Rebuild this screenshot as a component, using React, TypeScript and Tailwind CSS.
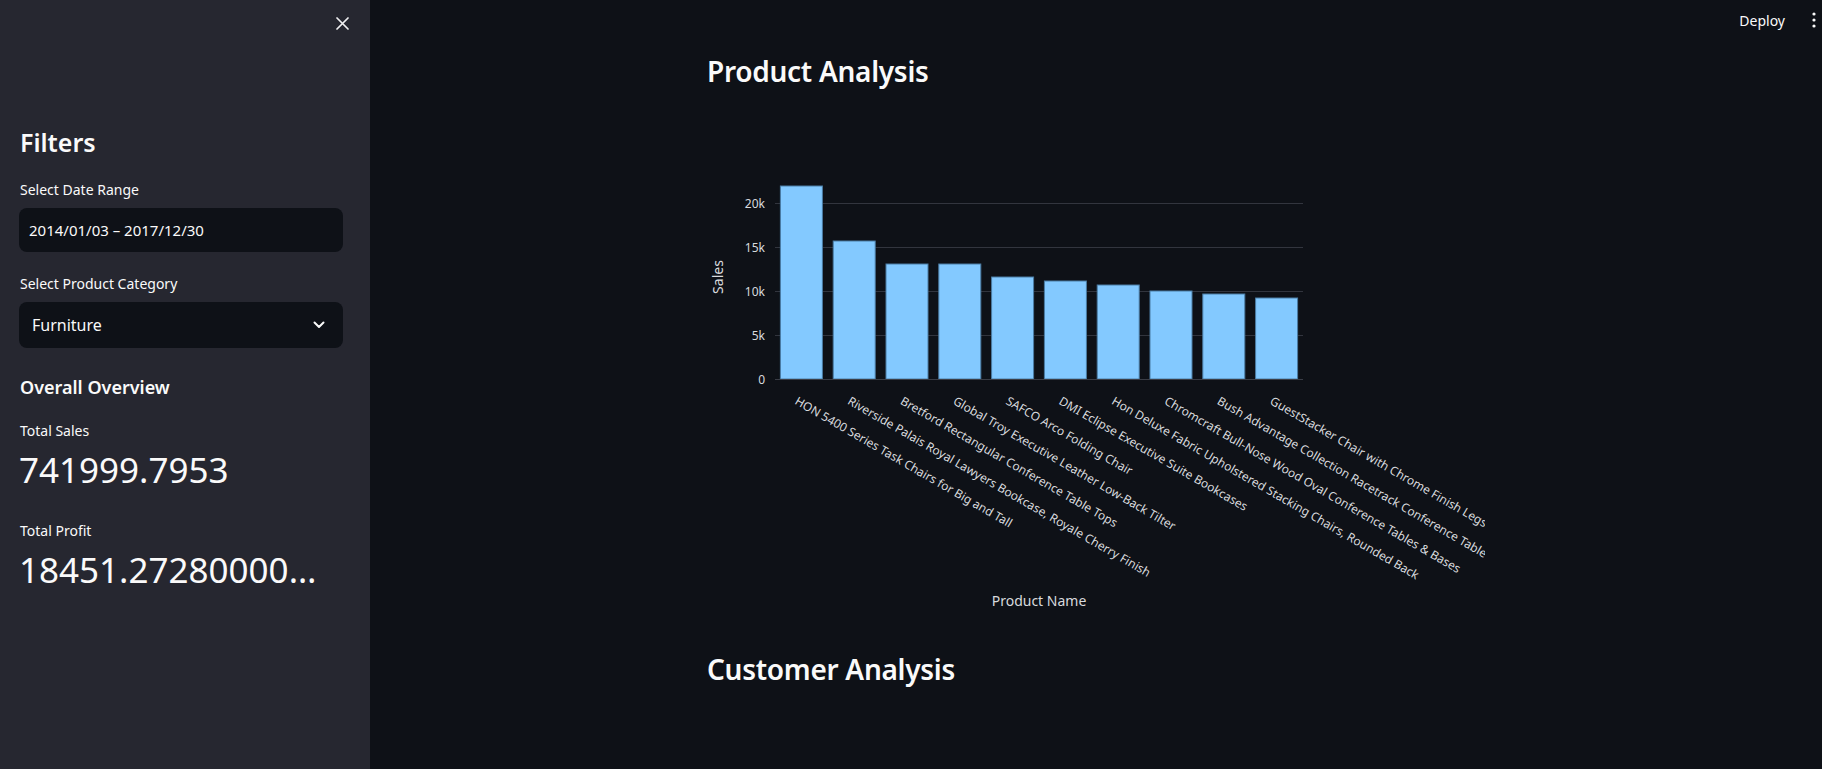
const sales = [
  { name: 'HON 5400 Series Task Chairs for Big and Tall', top: 76 },
  { name: 'Riverside Palais Royal Lawyers Bookcase, Royale Cherry Finish', top: 131 },
  { name: 'Bretford Rectangular Conference Table Tops', top: 154 },
  { name: 'Global Troy Executive Leather Low-Back Tilter', top: 154 },
  { name: 'SAFCO Arco Folding Chair', top: 167 },
  { name: 'DMI Eclipse Executive Suite Bookcases', top: 171 },
  { name: 'Hon Deluxe Fabric Upholstered Stacking Chairs, Rounded Back', top: 175 },
  { name: 'Chromcraft Bull-Nose Wood Oval Conference Tables & Bases', top: 181 },
  { name: 'Bush Advantage Collection Racetrack Conference Table', top: 184 },
  { name: 'GuestStacker Chair with Chrome Finish Legs', top: 188 },
];

const ticks = [
  { label: '20k', y: 93 },
  { label: '15k', y: 137 },
  { label: '10k', y: 181 },
  { label: '5k', y: 225 },
  { label: '0', y: 269 },
];

const font = '"Noto Sans", "Open Sans", sans-serif';

const SalesChart = () => {
  const left = 68;
  const band = 52.8;
  const zero = 269;

  return (
    <svg width="778" height="510" viewBox="0 0 778 510" className="block" style={{ fontFamily: font }}>
      {/* grid */}
      {ticks.map((t) => (
        <g key={t.label}>
          <line x1={left} x2={596} y1={t.y + 0.5} y2={t.y + 0.5} stroke="#32353e" strokeWidth="1" />
          <text x="58" y={t.y} textAnchor="end" dominantBaseline="central" fontSize="12" fill="#d8dade">
            {t.label}
          </text>
        </g>
      ))}

      {/* bars */}
      {sales.map((s, i) => {
        const cx = left + band * (i + 0.5);
        return (
          <g key={s.name}>
            <rect
              x={cx - 21}
              y={s.top}
              width="42"
              height={zero - s.top}
              fill="#83c9ff"
              stroke="#4a7ca4"
              strokeWidth="1"
            />
            <text
              x={cx - 7.5}
              y={293.5}
              fontSize="12"
              fill="#d8dade"
              transform={`rotate(30 ${cx - 7.5} 293.5)`}
            >
              {s.name}
            </text>
          </g>
        );
      })}

      <line x1={left} x2={596} y1={zero + 0.5} y2={zero + 0.5} stroke="#3a3d46" strokeWidth="1" />

      {/* axis titles */}
      <text
        x="10"
        y="167"
        fontSize="14"
        fill="#d8dade"
        textAnchor="middle"
        dominantBaseline="central"
        transform="rotate(-90 10 167)"
      >
        Sales
      </text>
      <text x="332" y="490" fontSize="14" fill="#d8dade" textAnchor="middle" dominantBaseline="central">
        Product Name
      </text>
    </svg>
  );
};

const App = () => {
  return (
    <div className="flex h-[769px] w-full overflow-hidden bg-[#0e1117] text-[#fafafa]" style={{ fontFamily: font }}>
      {/* Sidebar */}
      <aside className="flex w-[370px] shrink-0 flex-col bg-[#262730] pl-[19px] pr-[27px]">
        <div className="flex h-[30px] justify-end pt-[17px]">
          <svg width="13" height="13" viewBox="0 0 13 13" className="mr-[-6px]">
            <path d="M1 1 L12 12 M12 1 L1 12" stroke="#f0f0f2" strokeWidth="1.7" strokeLinecap="round" />
          </svg>
        </div>

        <h2 className="mt-[96px] pl-px text-[25px] leading-[32px] font-semibold">Filters</h2>

        <label className="mt-[22px] pl-px text-[14px] leading-[20px]">Select Date Range</label>
        <div className="mt-[8px] flex h-[44px] items-center rounded-lg bg-[#0e1117] pl-[10px] text-[15px]">
          2014/01/03 – 2017/12/30
        </div>

        <label className="mt-[22px] pl-px text-[14px] leading-[20px]">Select Product Category</label>
        <div className="mt-[8px] flex h-[46px] items-center justify-between rounded-lg bg-[#0e1117] pr-[18px] pl-[13px] text-[16px]">
          <span>Furniture</span>
          <svg width="12" height="8" viewBox="0 0 12 8">
            <path d="M1.5 1.5 L6 6 L10.5 1.5" fill="none" stroke="#fafafa" strokeWidth="2" strokeLinecap="round" strokeLinejoin="round" />
          </svg>
        </div>

        <h3 className="mt-[26px] pl-px text-[18px] leading-[26px] font-semibold">Overall Overview</h3>

        <div className="mt-[21px] pl-px text-[14px] leading-[20px]">Total Sales</div>
        <div className="mt-[7px] text-[35px] leading-[44px]">741999.7953</div>

        <div className="mt-[29px] pl-px text-[14px] leading-[20px]">Total Profit</div>
        <div className="mt-[7px] mr-[14px] truncate text-[35px] leading-[44px]">18451.272800000006</div>
      </aside>

      {/* Main */}
      <main className="flex flex-1 flex-col">
        <header className="flex h-[40px] items-center justify-end gap-[27px] pr-[6px]">
          <span className="text-[14px]">Deploy</span>
          <svg width="4" height="16" viewBox="0 0 4 16">
            <circle cx="2" cy="2" r="1.6" fill="#fafafa" />
            <circle cx="2" cy="8" r="1.6" fill="#fafafa" />
            <circle cx="2" cy="14" r="1.6" fill="#fafafa" />
          </svg>
        </header>

        <div className="mx-auto w-[778px]">
          <h2 className="mt-[12px] text-[28px] leading-[38px] font-semibold tracking-[-0.01em]">Product Analysis</h2>
          <div className="mt-[20px]">
            <SalesChart />
          </div>
          <h2 className="mt-[30px] text-[28px] leading-[38px] font-semibold tracking-[-0.01em]">Customer Analysis</h2>
        </div>
      </main>
    </div>
  );
};

export default App;
